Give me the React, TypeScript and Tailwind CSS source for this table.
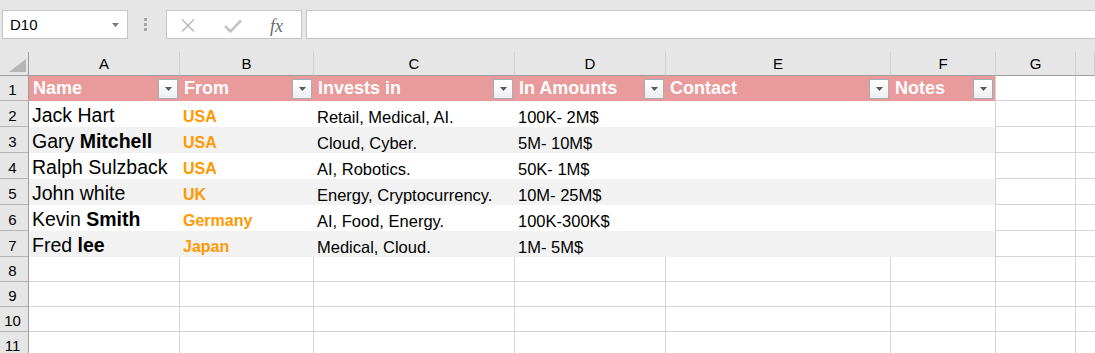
import type { ReactNode } from 'react'

const grid =
  'grid grid-cols-[29px_151px_134px_201px_151px_225px_105px_80px_1fr]'

type Person = {
  name: ReactNode
  from: string
  invests: string
  amount: string
}

const people: Person[] = [
  { name: 'Jack Hart', from: 'USA', invests: 'Retail, Medical, AI.', amount: '100K- 2M$' },
  {
    name: (
      <>
        Gary <b>Mitchell</b>
      </>
    ),
    from: 'USA',
    invests: 'Cloud, Cyber.',
    amount: '5M- 10M$',
  },
  { name: 'Ralph Sulzback', from: 'USA', invests: 'AI, Robotics.', amount: '50K- 1M$' },
  { name: 'John white', from: 'UK', invests: 'Energy, Cryptocurrency.', amount: '10M- 25M$' },
  {
    name: (
      <>
        Kevin <b>Smith</b>
      </>
    ),
    from: 'Germany',
    invests: 'AI, Food, Energy.',
    amount: '100K-300K$',
  },
  {
    name: (
      <>
        Fred <b>lee</b>
      </>
    ),
    from: 'Japan',
    invests: 'Medical, Cloud.',
    amount: '1M- 5M$',
  },
]

const headers = ['Name', 'From', 'Invests in', 'In Amounts', 'Contact', 'Notes']

export default function App() {
  return (
    <div className="h-[353px] w-[1095px] overflow-hidden bg-white font-['Liberation_Sans',Arial,sans-serif] text-black">
      <FormulaBar />
      <ColumnHeaders />

      <div className={`${grid} h-[25px]`}>
        <RowHead n={1} />
        {headers.map((h, i) => (
          <div
            key={h}
            className={
              i === 5
                ? 'flex justify-between border-r border-[#d4d4d4] bg-[#e99a9a]'
                : 'flex justify-between bg-[#e99a9a]'
            }
          >
            <span className="self-end whitespace-nowrap pb-[4px] pl-[4px] text-[18px] font-bold leading-none text-white">
              {h}
            </span>
            <FilterButton />
          </div>
        ))}
        <GridCell />
        <GridCell last />
      </div>

      {people.map((p, i) => (
        <DataRow key={i} n={i + 2} person={p} shaded={i % 2 === 1} />
      ))}

      {[8, 9, 10, 11].map((n) => (
        <div key={n} className={`${grid} h-[25px]`}>
          <RowHead n={n} />
          <GridCell />
          <GridCell />
          <GridCell />
          <GridCell />
          <GridCell />
          <GridCell />
          <GridCell />
          <GridCell last />
        </div>
      ))}
    </div>
  )
}

function FormulaBar() {
  return (
    <div className="flex h-[52px] items-start bg-[#e6e6e6] pt-[10px]">
      <div className="ml-[2px] flex h-[29px] w-[126px] items-center justify-between border border-[#c6c6c6] bg-white pl-[7px] pr-[8px]">
        <span className="text-[15px] leading-none">D10</span>
        <svg width="7" height="4" viewBox="0 0 7 4">
          <path d="M0 0h7L3.5 4z" fill="#7a7a7a" />
        </svg>
      </div>
      <div className="ml-[16px] mt-[8px] flex flex-col gap-[2px]">
        <span className="h-[3px] w-[3px] bg-[#a6a6a6]" />
        <span className="h-[3px] w-[3px] bg-[#a6a6a6]" />
        <span className="h-[3px] w-[3px] bg-[#a6a6a6]" />
      </div>
      <div className="ml-[19px] flex h-[29px] w-[136px] items-center border border-[#c6c6c6] bg-white pl-[14px] pt-[2px]">
        <svg width="14" height="13" viewBox="0 0 14 13">
          <path d="M1 0.5L13 12.5M13 0.5L1 12.5" stroke="#bdbdbd" strokeWidth="1.6" fill="none" />
        </svg>
        <svg className="ml-[29px]" width="18" height="14" viewBox="0 0 18 14">
          <path d="M1 7L6.5 12.5L17 1.5" stroke="#c4c4c4" strokeWidth="2.6" fill="none" />
        </svg>
        <span className="ml-[28px] font-['Liberation_Serif',serif] text-[18px] italic leading-none text-[#6a6a6a]">
          fx
        </span>
      </div>
      <div className="ml-[4px] h-[29px] flex-1 border border-r-0 border-[#c6c6c6] bg-white" />
    </div>
  )
}

function ColumnHeaders() {
  return (
    <div className={`${grid} h-[24px]`}>
      <div className="flex items-end justify-end border-b border-r border-[#9e9e9e] bg-[#e6e6e6] pb-[3px] pr-[2px]">
        <svg width="17" height="13" viewBox="0 0 17 13">
          <path d="M17 0V13H0z" fill="#b5b5b5" />
        </svg>
      </div>
      {['A', 'B', 'C', 'D', 'E', 'F', 'G', ''].map((c, i) => (
        <div
          key={i}
          className="flex items-end justify-center border-b border-r border-b-[#9e9e9e] border-r-[#d0d0d0] bg-[#e6e6e6] pb-[4px] text-[15px] leading-none"
        >
          {c}
        </div>
      ))}
    </div>
  )
}

function RowHead({ n }: { n: number }) {
  return (
    <div className="flex items-end justify-center border-b border-r border-b-[#b4b4b4] border-r-[#9e9e9e] bg-[#e6e6e6] pb-[3px] pr-[3px] text-[15px] leading-none">
      {n}
    </div>
  )
}

function GridCell({ last }: { last?: boolean }) {
  return (
    <div
      className={
        last
          ? 'border-b border-[#d4d4d4] bg-white'
          : 'border-b border-r border-[#d4d4d4] bg-white'
      }
    />
  )
}

function FilterButton() {
  return (
    <div className="mr-[2px] flex h-[20px] w-[20px] shrink-0 items-center justify-center self-center border border-[#a7adb5] bg-linear-to-b from-white to-[#eceef1]">
      <svg width="7" height="4" viewBox="0 0 7 4">
        <path d="M0 0h7L3.5 4z" fill="#5a5a5a" />
      </svg>
    </div>
  )
}

function DataRow({ n, person, shaded }: { n: number; person: Person; shaded: boolean }) {
  const bg = shaded ? 'bg-[#f2f2f2]' : 'bg-white'
  const cell = `flex items-end whitespace-nowrap pb-[2px] pl-[3px] leading-none ${bg}`
  return (
    <div className={`${grid} h-[26px]`}>
      <RowHead n={n} />
      <div className={`${cell} text-[19.5px]`}>
        <span>{person.name}</span>
      </div>
      <div className={`${cell} text-[16px] font-bold text-[#ff9900]`}>{person.from}</div>
      <div className={`${cell} text-[16.5px]`}>{person.invests}</div>
      <div className={`${cell} text-[16.5px]`}>{person.amount}</div>
      <div className={bg} />
      <div className={`${bg} border-r border-[#d4d4d4]`} />
      <GridCell />
      <GridCell last />
    </div>
  )
}
